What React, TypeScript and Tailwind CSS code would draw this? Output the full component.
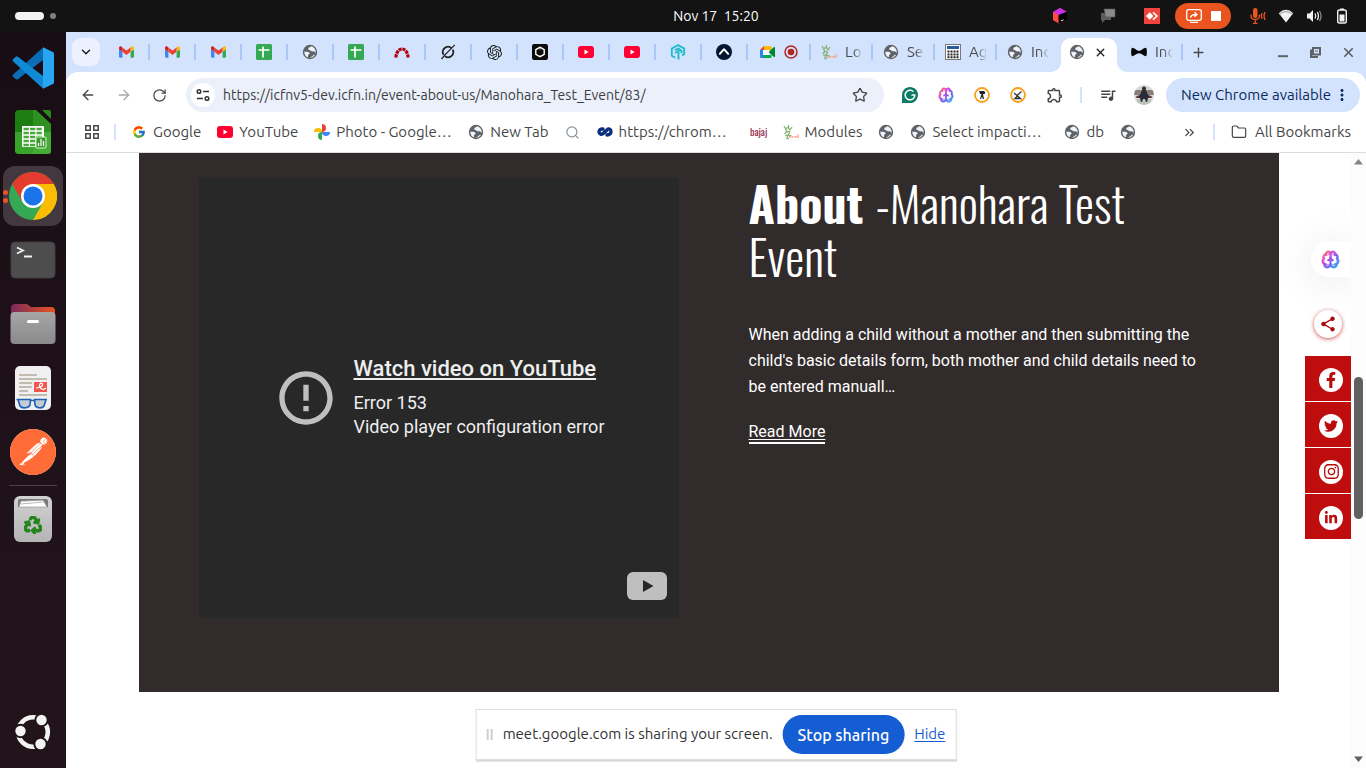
import type { ReactNode } from 'react';
import { ChevronDown, ArrowLeft, ArrowRight, Brain as BrainOutline, RotateCw, Star, Folder, Plus, X, Search, ChevronsRight } from 'lucide-react';
import { FaFacebookF, FaInstagram, FaLinkedinIn, FaRecycle, FaTwitter } from 'react-icons/fa';
import { FcGoogle } from 'react-icons/fc';
import { MdErrorOutline, MdMoreVert, MdOutlineExtension, MdOutlineQueueMusic, MdShare } from 'react-icons/md';
import { SiGrammarly, SiOpenai, SiPostman } from 'react-icons/si';

/* ---------- FAVICONS ---------- */

const Gmail = () => (
  <svg className="w-[15px] h-3" viewBox="52 42 88 66">
    <path fill="#4285f4" d="M58 108h14V74L52 59v43c0 3.32 2.69 6 6 6" />
    <path fill="#34a853" d="M120 108h14c3.32 0 6-2.69 6-6V59l-20 15" />
    <path fill="#fbbc04" d="M120 48v26l20-15v-8c0-7.42-8.47-11.65-14.4-7.2" />
    <path fill="#ea4335" d="M72 74V48l24 18 24-18v26L96 92" />
    <path fill="#c5221f" d="M52 51v8l20 15V48l-5.6-4.2c-5.94-4.45-14.4-.22-14.4 7.2" />
  </svg>
);

const Sheets = () => (
  <svg className="size-4" viewBox="0 0 16 16">
    <rect width="16" height="16" rx="1.5" fill="#34a853" />
    <path d="M2.5 6h11M7 2.5v11" stroke="#fff" strokeWidth="1.7" />
  </svg>
);

const Globe = () => (
  <svg className="size-4 shrink-0" viewBox="0 0 16 16">
    <circle cx="8" cy="8" r="7.2" fill="#5f6368" />
    <path
      d="M9 2.3c-.4 1.2-2.2.8-2.6 2-.3 1-.2 1.6.9 1.7 1.3.1 1.2 1 2.3 1.3 1 .3 1.8-.2 2.6.3.6.4.9 1 1.6 1.1.2-3.2-1.9-5.8-4.8-6.4zM2.2 7.7c1 .1 2.1-.2 3.2.1 1.2.3 2.3.8 2.2 1.7-.1.9-1.2.8-1.5 1.6-.2.8.3 1.7-.5 2.2-2-1-3.3-3-3.4-5.6zM8.3 13.8c.1-.9.9-1.2 1.7-1.4.9-.3.7-1.3 1.7-1.5.5-.1.9 0 1.2.2-.9 1.6-2.6 2.7-4.6 2.7z"
      fill="#eef3fc"
    />
  </svg>
);

const Redmine = () => (
  <svg className="w-4 h-3" viewBox="0 0 16 12">
    <path d="M2 11.5a6 8.5 0 0 1 12 0" fill="none" stroke="#b0000f" strokeWidth="3.2" strokeDasharray="3.2 .7" />
  </svg>
);

const Grok = () => (
  <svg className="size-4" viewBox="0 0 16 16" fill="none" stroke="#1c1c1c">
    <path d="M11.5 4.1A5.2 5.2 0 0 0 3.6 10.7M4.8 12.1a5.2 5.2 0 0 0 7.9-6.4" strokeWidth="1.7" />
    <path d="M1.5 15 6 9.7M5.5 10.3 14.8.8" strokeWidth="1.2" />
  </svg>
);

const BlackHex = () => (
  <svg className="size-4" viewBox="0 0 16 16">
    <rect width="16" height="16" rx="2" fill="#0c0c0c" />
    <path d="M8 3.2l4.2 2.4v4.8L8 12.8l-4.2-2.4V5.6z" fill="none" stroke="#fff" strokeWidth="1.4" />
    <path d="M3.8 5.6 8 3.2v2.4M12.2 10.4 8 12.8V11" stroke="#fff" fill="none" strokeWidth=".7" />
  </svg>
);

const YouTube = () => (
  <svg className="w-4 h-3" viewBox="0 0 16 12">
    <rect width="16" height="12" rx="3" fill="#ff0033" />
    <path d="M6.5 3.6v4.8L10.6 6z" fill="#fff" />
  </svg>
);

const CyanHex = () => (
  <svg className="size-4" viewBox="0 0 16 16" fill="none" stroke="#1fbccb" strokeWidth="1.9">
    <path d="M5.2 13.8 1.8 11.8V4.5L8 1.2l6.2 3.3V10L12 11.4" />
    <path d="M8.5 15.5V7L5 9M4.8 6.2 8.5 4.500l3 2.500v2" />
  </svg>
);

const NavyCaret = () => (
  <svg className="size-4" viewBox="0 0 16 16">
    <circle cx="8" cy="8" r="8" fill="#08152e" />
    <path d="M3.8 9.8 8 5.2l4.2 4.6" fill="none" stroke="#fff" strokeWidth="2" strokeLinecap="round" strokeLinejoin="round" />
  </svg>
);

const Meet = () => (
  <svg className="w-[15px] h-3" viewBox="0 0 15 12">
    <path d="M0 4 4 0v4z" fill="#ea4335" />
    <path d="M0 4h3v8H1a1 1 0 0 1-1-1z" fill="#2684fc" />
    <path d="M4 0h6.500a1 1 0 0 1 1 1v3H4z" fill="#ffba00" />
    <path d="M3 9h8.500v2a1 1 0 0 1-1 1H3z" fill="#00ac47" />
    <path d="M8.500 6 14 1c.4-.3 1 0 1 .5v9c0 .5-.6.8-1 .5z" fill="#00832d" />
    <path d="M3 4h6v5H3z" fill="#fff" />
  </svg>
);

const Recording = () => (
  <svg className="size-[14px]" viewBox="0 0 14 14">
    <circle cx="7" cy="7" r="6" fill="none" stroke="#b3261e" strokeWidth="1.5" />
    <circle cx="7" cy="7" r="3.3" fill="#b3261e" />
  </svg>
);

const Sprout = () => (
  <svg className="size-4 shrink-0" viewBox="0 0 16 16" fill="none">
    <path d="M1 2 3 5.500 4.500 3M3 5.500 3.500 8 1.500 10M5.500 1v3L7 6l2-3M4 8c2-1.500 3.500 0 2 1.500S6 12 8 11.500M2.500 12c1-1.500 3-1 2 .5S3 15 6 14.500" stroke="#86b377" strokeWidth="1.3" />
    <path d="M6.500 14v-2M8 14v-2c1-.8 1.500 0 1.500 2m1-1.300H12m.7 1.300v-2c.8-.8 1.300 0 1.300 2m1.200-4v4" stroke="#f4926e" strokeWidth=".8" />
  </svg>
);

const Calendar = () => (
  <svg className="size-4 shrink-0" viewBox="0 0 16 16">
    <rect x=".5" y=".5" width="15" height="15" fill="#fff" stroke="#777" />
    <path d="M2 3.5h12" stroke="#2a5c9c" strokeWidth="3" />
    <path d="M2.5 7.5h11M2.5 10.5h11M2.5 13.3h11" stroke="#222" strokeWidth="2" strokeDasharray="2 1" />
  </svg>
);

const BowTie = () => (
  <svg className="w-4 h-2.5 shrink-0" viewBox="0 0 16 10">
    <path d="M.5 1.500C1 .3 2 .6 6 3.200q2 1 4 0C14 .6 15 .3 15.500 1.500c.5 2 .5 5 0 7-.5 1.200-1.500.9-5.500-1.700q-2-1-4 0C2 9.400 1 9.700.5 8.500c-.5-2-.5-5 0-7z" fill="#080808" />
  </svg>
);

const Photos = () => (
  <svg className="size-4" viewBox="0 0 16 16">
    <path d="M8 8V0a4 4 0 0 1 0 8z" fill="#ea4335" />
    <path d="M8 8h8a4 4 0 0 1-8 0z" fill="#4285f4" />
    <path d="M8 8v8a4 4 0 0 1 0-8z" fill="#34a853" />
    <path d="M8 8H0a4 4 0 0 1 8 0z" fill="#fbbc04" />
  </svg>
);

const Knot = () => (
  <svg className="w-4 h-3" viewBox="0 0 16 12" fill="none" stroke="#0b2f7a" strokeWidth="3.4" strokeLinecap="round">
    <path d="M6 3C3.500 2.800 2 4 2 6s2.500 3 4.500 1.500M14 5.500c0 2-1.500 3.500-4 3.500M5.500 7.800 7.500 6.500M10 3.800C11.500 2.500 14 3 14 5.500M7.500 6.500 10 4" />
  </svg>
);

const Bajaj = () => (
  <span className="font-[Oswald,sans-serif] text-[10px] leading-4 text-[#9a2f4d]">bajaj</span>
);

const Brain = ({ className }: { className: string }) => (
  <BrainOutline className={className} stroke="url(#brainFill)" strokeWidth={2.6} fill="url(#brainFill)" fillOpacity={0.5} />
);

/* ---------- DOCK ICONS ---------- */

const VsCode = () => (
  <svg className="size-[42px]" viewBox="0 0 42 42">
    <path d="M31 .5 1.200 27.600c-.8.7-.8 1.600 0 2.300l2.400 2.200c.7.6 1.600.6 2.300.1L31 13z" fill="#0b6db3" />
    <path d="M31 41.500 1.200 14.400c-.8-.7-.8-1.600 0-2.300l2.400-2.200c.7-.6 1.600-.6 2.300-.1L31 29z" fill="#118ad6" />
    <path d="m31 .2 9.800 4.700c.7.4 1.200 1 1.200 1.900v28.400c0 .9-.5 1.500-1.200 1.900L31 41.800z" fill="#27a7f2" />
  </svg>
);

const Calc = () => (
  <svg className="w-[38px] h-[46px]" viewBox="0 0 38 46">
    <path d="M5 1h17l15 14v26a4 4 0 0 1-4 4H5a4 4 0 0 1-4-4V5a4 4 0 0 1 4-4z" fill="#1d7d12" />
    <path d="M1 23h36v18a4 4 0 0 1-4 4H5a4 4 0 0 1-4-4z" fill="#39a42c" />
    <path d="M19 1h3l15 14v30H19z" fill="#5cc04b" fillOpacity=".3" />
    <path d="M28 1h7a2 2 0 0 1 2 2v7z" fill="#2b8a20" />
    <rect x="8" y="17" width="22" height="21" rx="1" fill="#fff" />
    <path d="M9.500 20h19M9.500 24h19M9.500 28h19M9.500 32h19M9.500 36h19" stroke="#48a93a" strokeWidth="2.600" strokeDasharray="5.300 1.200" />
    <rect x="22" y="28" width="10" height="11" rx="1" fill="#3a9a2e" stroke="#d9f1d5" />
    <path d="M24.500 37v-3M27 37v-7M29.500 37v-5" stroke="#fff" strokeWidth="1.2" />
  </svg>
);

const Chrome = () => (
  <svg className="size-12" viewBox="0 0 48 48">
    <circle cx="24" cy="24" r="24" fill="#34a853" />
    <path d="M3.200 12A24 24 0 0 1 44.800 12H24L13.600 30z" fill="#e33b2e" />
    <path d="M44.800 12A24 24 0 0 1 24 48l10.400-18L36 12z" fill="#fbbc04" />
    <path d="M24 12h20.800L34.400 30z" fill="#fbbc04" />
    <circle cx="24" cy="24" r="12" fill="#fff" />
    <circle cx="24" cy="24" r="9.500" fill="#1a73e8" />
  </svg>
);

const Terminal = () => (
  <svg className="w-[46px] h-[38px]" viewBox="0 0 46 38">
    <rect x="1" y="1" width="44" height="36" rx="4" fill="#4d4d4d" stroke="#3a4038" />
    <path d="m7 6.500 6 3-6 3M14 15.500h8" fill="none" stroke="#f2f2f2" strokeWidth="1.800" />
  </svg>
);

const Files = () => (
  <svg className="w-[46px] h-[42px]" viewBox="0 0 46 42">
    <defs>
      <linearGradient id="filesTab">
        <stop offset="0" stopColor="#7b2a5c" />
        <stop offset="1" stopColor="#e95420" />
      </linearGradient>
      <linearGradient id="filesBody" x2="0" y2="1">
        <stop offset="0" stopColor="#a6a6a6" />
        <stop offset="1" stopColor="#8a8a8a" />
      </linearGradient>
    </defs>
    <path d="M1 5a4 4 0 0 1 4-4h12l4 3h20a4 4 0 0 1 4 4v16H1z" fill="url(#filesTab)" />
    <rect x=".5" y="9" width="45" height="32" rx="4" fill="url(#filesBody)" />
    <rect x="17" y="17" width="12" height="3" rx="1.500" fill="#fff" />
  </svg>
);

const DocViewer = () => (
  <svg className="w-[38px] h-[46px]" viewBox="0 0 38 46">
    <rect x="1" y="1" width="36" height="44" rx="5" fill="#f0f0f0" />
    <path d="M5 10h18M5 14h28M5 18h13M5 22h13M5 26h9M5 30h28" stroke="#b3aa9a" strokeWidth="1.700" />
    <rect x="20" y="17" width="13" height="10" fill="#f4574d" />
    <path d="M22 23c5 0 8-3 6-4.500s-4 3-1 5 4 0 5-.5" fill="none" stroke="#fff" strokeWidth="1.200" />
    <g fill="#c3ccd4" stroke="#1d5fb4" strokeWidth="1.600">
      <path d="M4 34.500h12.500L16 40c-1 3-8 4-10 1zM20.500 34.500H32L30 41c-2 3-8 2-9-1zM16 35.500h5M2.500 34.500H5M31 34.500h2" />
    </g>
  </svg>
);

const Postman = () => (
  <span className="grid place-items-center rounded-full bg-white text-[#ff6c37]">
    <SiPostman className="size-[46px]" />
  </span>
);

const Trash = () => (
  <span className="flex h-[46px] w-[38px] flex-col items-center rounded-md bg-linear-to-b from-[#d2d2d2] to-[#b4b4b4] pt-0.5">
    <svg className="w-8 h-2.5" viewBox="0 0 32 10">
      <path d="M1 9V3q0-2 2-2h26q2 0 2 2v6z" fill="#777" />
      <path d="m2 9 2-6 22-1 4 7zM6 3l20-1 3 5M4 6l22-2" fill="#fff" stroke="#999" strokeWidth=".7" />
    </svg>
    <FaRecycle className="mt-2 size-[18px] text-[#26841c]" stroke="currentColor" strokeWidth={36} />
  </span>
);

const UbuntuLogo = () => (
  <svg className="size-9" viewBox="0 0 36 36">
    <circle cx="18" cy="18" r="14.800" fill="none" stroke="#f3f3f3" strokeWidth="4.600" />
    <g fill="#f3f3f3" stroke="#20141a" strokeWidth="2">
      <circle cx="5.500" cy="17" r="6.200" />
      <circle cx="26.500" cy="6" r="6.200" />
      <circle cx="25.500" cy="30" r="6.200" />
    </g>
  </svg>
);

/* ---------- DATA ---------- */

const pinnedTabs: { name: string; icon: ReactNode }[] = [
  { name: 'Gmail 1', icon: <Gmail /> },
  { name: 'Gmail 2', icon: <Gmail /> },
  { name: 'Gmail 3', icon: <Gmail /> },
  { name: 'Sheets 1', icon: <Sheets /> },
  { name: 'Site', icon: <Globe /> },
  { name: 'Sheets 2', icon: <Sheets /> },
  { name: 'Redmine', icon: <Redmine /> },
  { name: 'Grok', icon: <Grok /> },
  { name: 'ChatGPT', icon: <SiOpenai className="size-[15px] text-[#1c1c1c]" /> },
  { name: 'Blackbox', icon: <BlackHex /> },
  { name: 'YouTube 1', icon: <YouTube /> },
  { name: 'YouTube 2', icon: <YouTube /> },
  { name: 'Hexagon', icon: <CyanHex /> },
  { name: 'Caret', icon: <NavyCaret /> },
];

const titledTabs: { title: string; icon: ReactNode }[] = [
  { title: 'Lo', icon: <Sprout /> },
  { title: 'Se', icon: <Globe /> },
  { title: 'Ag', icon: <Calendar /> },
];

const bookmarks: { name: string; label?: string; elided?: boolean; icon: ReactNode }[] = [
  { name: 'Google', label: 'Google', icon: <FcGoogle className="size-[14px]" /> },
  { name: 'YouTube', label: 'YouTube', icon: <YouTube /> },
  { name: 'Photos', label: 'Photo - Google…', elided: true, icon: <Photos /> },
  { name: 'New Tab', label: 'New Tab', icon: <Globe /> },
  { name: 'Search', icon: <Search size={15} color="#8596a6" strokeWidth={2} /> },
  { name: 'Chrome store', label: 'https://chrom…', elided: true, icon: <Knot /> },
  { name: 'Bajaj', icon: <Bajaj /> },
  { name: 'Modules', label: 'Modules', icon: <Sprout /> },
  { name: 'Site', icon: <Globe /> },
  { name: 'Select', label: 'Select impacti…', elided: true, icon: <Globe /> },
  { name: 'db', label: 'db', icon: <Globe /> },
  { name: 'Other site', icon: <Globe /> },
];

const socials = [
  { name: 'Facebook', icon: <FaFacebookF size={16} /> },
  { name: 'Twitter', icon: <FaTwitter size={14} /> },
  { name: 'Instagram', icon: <FaInstagram size={17} /> },
  { name: 'LinkedIn', icon: <FaLinkedinIn size={14} /> },
];

/* ---------- SECTIONS ---------- */

function TopBar() {
  return (
    <header className="flex h-8 shrink-0 items-center bg-[#131313] text-white">
      <div className="flex w-[66px] items-center gap-1.5 pl-[15px]">
        <span className="h-2 w-[29px] rounded-full bg-[#f2f2f2]" />
        <span className="size-1.5 rounded-full bg-[#808080]" />
      </div>
      <div className="grid flex-1 grid-cols-[1fr_auto_1fr] items-center">
        <span />
        <time className="whitespace-pre text-[14px] leading-[30px]">Nov 17  15:20</time>
        <div className="flex items-center justify-end pr-4">
          <svg className="mr-8 size-4" viewBox="0 0 16 16">
            <path d="M1 4 8 0l7 4v8l-7 4-7-4z" fill="#fd2a6c" />
            <path d="M1 4 8 0l7 4-7 4z" fill="#c932e8" />
            <path d="M1 4v8l7 4V8z" fill="#ff4a3f" />
            <path d="m6.500 7 8.500-3.500V12l-7 4-1.500-1z" fill="#000" />
            <path d="m9 13 2.500-1.200" stroke="#fff" />
          </svg>
          <svg className="mr-7 size-4" viewBox="0 0 16 16">
            <path d="M1 5h10v7H5l-3 3v-3H1z" fill="#5d5d5d" />
            <path d="M4 1h11v8H5V5z" fill="#8b8b8b" stroke="#555" strokeWidth=".7" />
          </svg>
          <svg className="mr-[15px] size-4" viewBox="0 0 16 16">
            <path d="M0 0h16v16H0z" fill="#ef443b" />
            <path d="m2 8 3.700-3.700L9.400 8l-3.700 3.700z" fill="#fff" />
            <path d="m9 4.300 4 3.700-4 3.700" fill="none" stroke="#fff" strokeWidth="1.600" />
          </svg>
          <button aria-label="Stop screen share" className="mr-[19px] flex h-[26px] w-14 items-center justify-center gap-[9px] rounded-full bg-[#e95420]">
            <svg className="size-4" viewBox="0 0 16 16" fill="none" stroke="#fff" strokeWidth="1.300">
              <rect x=".7" y="1.700" width="14.600" height="10.600" rx="2" />
              <path d="M4 14.300h8M4.500 9.500C5 7 7 6.500 10 6.500M8.500 4.300 11 6.500 8.500 8.700" />
            </svg>
            <span className="size-2.5 bg-white" />
          </button>
          <svg className="mr-3 size-4" viewBox="0 0 16 16" fill="none" stroke="#e95420" strokeWidth="1.300">
            <rect x="3" y="0" width="4.500" height="10" rx="2.200" fill="#e95420" stroke="none" />
            <path d="M1 6.500v1C1 10 3 11.500 5.200 11.500S9.500 10 9.500 7.500v-1M5.200 11.500V15M3 15.300h4.500M12 5q-1.500 3 0 6M15 4q-2 4 0 8" />
          </svg>
          <svg className="mr-3 size-4" viewBox="0 0 16 16">
            <path d="M8 14.500.8 5.200Q8-1.500 15.200 5.200z" fill="#f2f2f2" />
            <path d="M1.700 6.300Q8 .8 14.300 6.300" fill="none" stroke="#777" strokeWidth=".8" />
          </svg>
          <svg className="mr-3 size-4" viewBox="0 0 16 16" fill="none" stroke="#f2f2f2" strokeWidth="1.300">
            <path d="M1 5.500h2.500L7 2v12l-3.500-3.500H1z" fill="#f2f2f2" stroke="none" />
            <path d="M9 5.500q1.500 2.500 0 5M11.300 4q2.300 4 0 8" />
            <path d="M13.500 3q3 5 0 10" stroke="#888" />
          </svg>
          <svg className="size-4" viewBox="0 0 16 16">
            <rect x="3.700" y="2" width="8.600" height="13" rx="1.800" fill="none" stroke="#f2f2f2" strokeWidth="1.400" />
            <path d="M6 .5h4V2H6zM5.500 6.500h5v7h-5z" fill="#f2f2f2" />
          </svg>
        </div>
      </div>
    </header>
  );
}

function DockItem({ name, active, children }: { name: string; active?: boolean; children: ReactNode }) {
  return (
    <button aria-label={name} className="relative flex h-16 w-full items-center justify-center">
      {active && (
        <>
          <span className="absolute inset-x-[3px] inset-y-0.5 rounded-xl bg-[#433740]" />
          <span className="absolute left-[3px] flex flex-col gap-[3px]">
            <span className="size-[5px] rounded-full bg-[#e95420]" />
            <span className="size-[5px] rounded-full bg-[#e95420]" />
          </span>
        </>
      )}
      <span className="relative">{children}</span>
    </button>
  );
}

function Dock() {
  return (
    <nav className="flex w-[66px] shrink-0 flex-col bg-linear-to-b from-[#180d14] via-[#1f1119] to-[#21151b] py-1">
      <DockItem name="Visual Studio Code"><VsCode /></DockItem>
      <DockItem name="Calc"><Calc /></DockItem>
      <DockItem name="Chrome" active><Chrome /></DockItem>
      <DockItem name="Terminal"><Terminal /></DockItem>
      <DockItem name="Files"><Files /></DockItem>
      <DockItem name="Document Viewer"><DocViewer /></DockItem>
      <DockItem name="Postman"><Postman /></DockItem>
      <hr className="mx-[9px] my-px border-[#4b4047]" />
      <DockItem name="Trash"><Trash /></DockItem>
      <div className="flex-1" />
      <DockItem name="Show Apps"><UbuntuLogo /></DockItem>
    </nav>
  );
}

const Divider = () => <span className="h-4 w-0.5 shrink-0 bg-[#a8c7fa]" />;

function FadedTitle({ children }: { children: ReactNode }) {
  return <span className="w-6 text-left text-[15px] text-[#474747] [mask-image:linear-gradient(90deg,#000_8px,transparent_18px)]">{children}</span>;
}

function TabStrip() {
  return (
    <div className="flex h-10 shrink-0 items-center pl-1.5">
      <button aria-label="Search tabs" className="mr-1 grid size-7 shrink-0 place-items-center rounded-[9px] bg-[#ebf1fe] text-[#1f1f1f]">
        <ChevronDown size={14} strokeWidth={2.5} />
      </button>
      {pinnedTabs.map((tab) => (
        <div key={tab.name} className="flex w-[46px] shrink-0 items-center">
          <button aria-label={tab.name} className="grid flex-1 place-items-center">{tab.icon}</button>
          <Divider />
        </div>
      ))}
      <div className="flex shrink-0 items-center">
        <button aria-label="Meet, recording" className="flex items-center gap-[9px] pr-[11px] pl-3"><Meet /><Recording /></button>
        <Divider />
      </div>
      {titledTabs.map((tab) => (
        <div key={tab.title} className="flex w-[62px] shrink-0 items-center">
          <button className="flex flex-1 items-center gap-2 pl-2.5">{tab.icon}<FadedTitle>{tab.title}</FadedTitle></button>
          <Divider />
        </div>
      ))}
      <button className="flex w-16 shrink-0 items-center gap-2 pl-2.5"><Globe /><FadedTitle>Inc</FadedTitle></button>

      {/* ACTIVE TAB */}
      <div className="relative flex h-[34px] w-14 shrink-0 items-center gap-[9px] self-end rounded-t-[10px] bg-white pb-1.5 pl-2">
        <span className="absolute -left-2.5 bottom-0 size-2.5 bg-white"><span className="block size-full rounded-br-[10px] bg-[#d3e3fd]" /></span>
        <span className="absolute -right-2.5 bottom-0 size-2.5 bg-white"><span className="block size-full rounded-bl-[10px] bg-[#d3e3fd]" /></span>
        <Globe />
        <button aria-label="Close tab"><X size={13} strokeWidth={2.5} className="text-[#1f1f1f]" /></button>
      </div>

      <div className="flex w-[66px] shrink-0 items-center">
        <button className="flex flex-1 items-center gap-2 pl-3.5"><BowTie /><FadedTitle>Inc</FadedTitle></button>
        <Divider />
      </div>
      <button aria-label="New tab" className="ml-2 text-[#474747]"><Plus size={15} strokeWidth={2.2} /></button>

      <div className="ml-auto flex items-center gap-5 pr-2.5 text-[#5f6368]">
        <button aria-label="Minimize">
          <svg className="size-3" viewBox="0 0 12 12"><path d="M1 10.200h10" stroke="currentColor" strokeWidth="2" /></svg>
        </button>
        <button aria-label="Restore">
          <svg className="size-3" viewBox="0 0 12 12" fill="none" stroke="currentColor" strokeWidth="2">
            <path d="M4 2h7v6.500H4zM2 3.500v7.500h7" /><path d="M6 5h3" strokeWidth="1" />
          </svg>
        </button>
        <button aria-label="Close window"><X size={15} strokeWidth={2.8} /></button>
      </div>
    </div>
  );
}

function Toolbar() {
  return (
    <div className="flex h-[46px] shrink-0 items-center rounded-t-xl bg-white pr-1.5 pl-3.5 text-[#474747]">
      <div className="flex items-center gap-5 pr-[19px]">
        <button aria-label="Back"><ArrowLeft size={16} /></button>
        <button aria-label="Forward"><ArrowRight size={16} className="text-[#a9a9a9]" /></button>
        <button aria-label="Reload"><RotateCw size={15} /></button>
      </div>
      <div className="flex h-[34px] flex-1 items-center rounded-full bg-[#ecf0fa] pr-4 pl-[5px]">
        <button aria-label="Site information" className="grid size-6 place-items-center rounded-full bg-white">
          <svg className="size-[14px]" viewBox="0 0 14 14" fill="none" stroke="#333" strokeWidth="1.500">
            <circle cx="3" cy="3.500" r="1.800" /><path d="M7 3.500h6M1 10.500h6" /><circle cx="11" cy="10.500" r="1.800" />
          </svg>
        </button>
        <input
          type="text"
          aria-label="Address"
          defaultValue="https://icfnv5-dev.icfn.in/event-about-us/Manohara_Test_Event/83/"
          className="min-w-0 flex-1 bg-transparent px-2 text-[14px] text-[#3a3d41] outline-none"
        />
        <button aria-label="Bookmark this page"><Star size={16} /></button>
      </div>
      <div className="flex items-center gap-5 pr-4 pl-[18px]">
        <button aria-label="Grammarly"><SiGrammarly className="size-4 text-[#0b7a66]" /></button>
        <button aria-label="Brain assistant"><Brain className="size-4" /></button>
        <button aria-label="Recorder">
          <svg className="size-4" viewBox="0 0 16 16">
            <circle cx="8" cy="8" r="7" fill="#fff" stroke="#f9a11b" strokeWidth="1.800" />
            <path d="M5 4h5l1 1v2H6zM7.500 7H9l1 5H8.800L8.200 9.500 7 12H6z" fill="#222" />
          </svg>
        </button>
        <button aria-label="Editor">
          <svg className="size-4" viewBox="0 0 16 16">
            <circle cx="8" cy="8" r="7" fill="#fff" stroke="#f9a11b" strokeWidth="1.800" />
            <path d="m4 6 3 2.500L11.500 4.500M5 11.500l2.500-2.500 3 2.500z" fill="none" stroke="#333" strokeWidth="1.300" />
          </svg>
        </button>
        <button aria-label="Extensions"><MdOutlineExtension className="size-[18px]" /></button>
      </div>
      <span className="h-4 w-0.5 bg-[#d3e3fd]" />
      <button aria-label="Media" className="ml-[17px]"><MdOutlineQueueMusic className="size-[18px]" /></button>
      <button aria-label="Profile" className="mr-3 ml-[17px]">
        <svg className="size-5 rounded-full" viewBox="0 0 20 20">
          <path d="M0 0h20v20H0z" fill="#d5d8d6" />
          <path d="M0 5h20v5H0z" fill="#8b8078" />
          <path d="M3 14h14v6H3z" fill="#b9c4bd" />
          <path d="M8 5h4l2 5 3 1v2h-3l-1 4h-1l-1-3H9l-1 3H7l-1-4H3v-2l3-1z" fill="#292b3a" />
          <circle cx="10" cy="3.500" r="2" fill="#3a2620" />
          <path d="M2 12h3M15 12h3" stroke="#7a3f33" strokeWidth="1.500" />
        </svg>
      </button>
      <button className="flex h-[34px] items-center gap-0.5 rounded-full bg-[#d3e3fd] pr-[9px] pl-[15px] text-[15px] whitespace-nowrap text-[#0a2a5e]">
        New Chrome available
        <MdMoreVert className="size-[18px]" />
      </button>
    </div>
  );
}

function BookmarksBar() {
  return (
    <div className="flex h-[35px] shrink-0 items-center border-b border-[#dadce0] bg-white pr-[15px] pb-1.5 pl-[19px] text-[15px] leading-5 whitespace-nowrap text-[#474747]">
      <button aria-label="Apps">
        <svg className="size-[14px]" viewBox="0 0 14 14" fill="none" stroke="#474747" strokeWidth="1.500">
          <path d="M.8.8h4.400v4.400H.8zM8.800.8h4.400v4.400H8.800zM.8 8.800h4.400v4.400H.8zM8.800 8.800h4.400v4.400H8.800z" />
        </svg>
      </button>
      <span className="mr-[15px] ml-[15px] h-4 w-0.5 bg-[#d3e3fd]" />
      <div className="flex items-center gap-4">
        {bookmarks.map((b) => (
          <a key={b.name} href="#" aria-label={b.name} className="flex items-center gap-1.5">
            <span className="flex w-4 justify-center">{b.icon}</span>
            {b.label && <span className={b.elided ? 'w-[116px]' : ''}>{b.label}</span>}
          </a>
        ))}
      </div>
      <div className="ml-auto flex items-center">
        <button aria-label="More bookmarks"><ChevronsRight size={15} /></button>
        <span className="mx-4 h-4 w-0.5 bg-[#d3e3fd]" />
        <a href="#" className="flex items-center gap-2"><Folder size={16} strokeWidth={1.8} />All Bookmarks</a>
      </div>
    </div>
  );
}

function AboutSection() {
  return (
    <section className="mx-auto grid w-full max-w-[1140px] grid-cols-[480fr_470fr] gap-[70px] bg-[#322b2b] px-[60px] pt-[23px] pb-[74px] font-[Roboto,sans-serif] text-white">
      {/* VIDEO */}
      <div className="relative mt-0.5 flex min-h-[440px] items-center justify-center gap-4 bg-[#282828] pl-px">
        <MdErrorOutline className="size-16 text-[#bfbfbf]" />
        <div className="text-[18px] leading-6 text-[#eee]">
          <a href="#" className="mb-2.5 block text-[22px] leading-6 font-medium underline underline-offset-2">Watch video on YouTube</a>
          <p>Error 153</p>
          <p>Video player configuration error</p>
        </div>
        <a href="#" aria-label="Watch on YouTube" className="absolute right-3 bottom-[18px]">
          <svg className="h-7 w-10" viewBox="0 0 40 28">
            <rect width="40" height="28" rx="6" fill="#bfbfbf" />
            <path d="M16 8v12l10.500-6z" fill="#282828" />
          </svg>
        </a>
      </div>

      {/* TEXT */}
      <div className="pr-2.5">
        <h2 className="font-[Oswald,sans-serif] text-[48px] leading-[53px] font-light">
          <b className="font-bold">About </b>-Manohara Test Event
        </h2>
        <p className="mt-10 text-[16px] leading-[26px]">
          When adding a child without a mother and then submitting the child's basic details form, both mother and child details need to be entered manuall…
        </p>
        <a href="#" className="mt-[22px] inline-block border-b-2 border-white text-[16px] leading-5 underline underline-offset-2">Read More</a>
      </div>
    </section>
  );
}

function SideWidgets() {
  return (
    <aside className="absolute top-[88px] right-0 flex flex-col items-end">
      <button aria-label="Open assistant" className="flex h-9 w-10 items-center rounded-l-full bg-white pl-2.5 shadow-[0_4px_40px_rgba(0,0,0,0.1)]">
        <Brain className="size-[19px]" />
      </button>
      <button aria-label="Share" className="mt-[33px] mr-[9px] grid size-7 place-items-center rounded-full bg-white text-[#a80a0a] shadow-[0_1px_4px_rgba(190,10,10,0.7)]">
        <MdShare size={18} />
      </button>
      <ul className="mt-[18px] flex flex-col gap-px">
        {socials.map((s) => (
          <li key={s.name}>
            <a href="#" aria-label={s.name} className="grid h-[45px] w-[46px] place-items-center bg-[#bf0c0c] pt-0.5 pl-1.5">
              <span className="grid size-6 place-items-center rounded-full bg-white text-[#b80c0c]">{s.icon}</span>
            </a>
          </li>
        ))}
      </ul>
    </aside>
  );
}

function Scrollbar() {
  return (
    <div className="flex w-[15px] shrink-0 flex-col items-center justify-between bg-[#fcfcfc] py-1.5">
      <svg className="h-1.5 w-[9px]" viewBox="0 0 9 6"><path d="M4.500 0 9 5.500H0z" fill="#858585" /></svg>
      <div className="flex w-full flex-1 flex-col items-center">
        <span className="grow-[212]" />
        <span className="w-[9px] grow-[142] rounded-full bg-[#606060]" />
        <span className="grow-[237]" />
      </div>
      <svg className="h-1.5 w-[9px]" viewBox="0 0 9 6"><path d="M0 .5h9L4.500 6z" fill="#606060" /></svg>
    </div>
  );
}

function SharingBar() {
  return (
    <div className="absolute bottom-2 left-1/2 flex -translate-x-1/2 items-center border border-[#dedede] bg-white px-2.5 py-[5px] text-[15px] whitespace-nowrap text-[#333] shadow-[0_2px_1px_#d5d5d5]">
      <span className="mr-2.5 h-[11px] w-1.5 border-x-2 border-[#cfcfcf]" />
      meet.google.com is sharing your screen.
      <button className="mx-2.5 h-[39px] rounded-full bg-[#155dd2] px-[15px] text-[16px] font-medium text-white">Stop sharing</button>
      <a href="#" className="text-[#155dd2] underline underline-offset-2">Hide</a>
    </div>
  );
}

export default function App() {
  return (
    <div className="flex min-h-screen flex-col bg-white font-[Ubuntu,'Noto_Sans',sans-serif]">
      <svg className="absolute size-0">
        <defs>
          <linearGradient id="brainFill" gradientUnits="userSpaceOnUse" x1="2" y1="2" x2="22" y2="22">
            <stop offset="0" stopColor="#ff8a3c" />
            <stop offset=".3" stopColor="#e24ad8" />
            <stop offset=".6" stopColor="#7b5bf2" />
            <stop offset="1" stopColor="#28b6f6" />
          </linearGradient>
        </defs>
      </svg>
      <TopBar />
      <div className="flex flex-1">
        <Dock />
        <div className="relative flex min-w-0 flex-1 flex-col">
          <div className="bg-[#d3e3fd]">
            <TabStrip />
            <Toolbar />
          </div>
          <BookmarksBar />
          <div className="flex flex-1">
            <main className="relative min-w-0 flex-1 overflow-hidden">
              <AboutSection />
              <SideWidgets />
            </main>
            <Scrollbar />
          </div>
          <SharingBar />
        </div>
      </div>
    </div>
  );
}
